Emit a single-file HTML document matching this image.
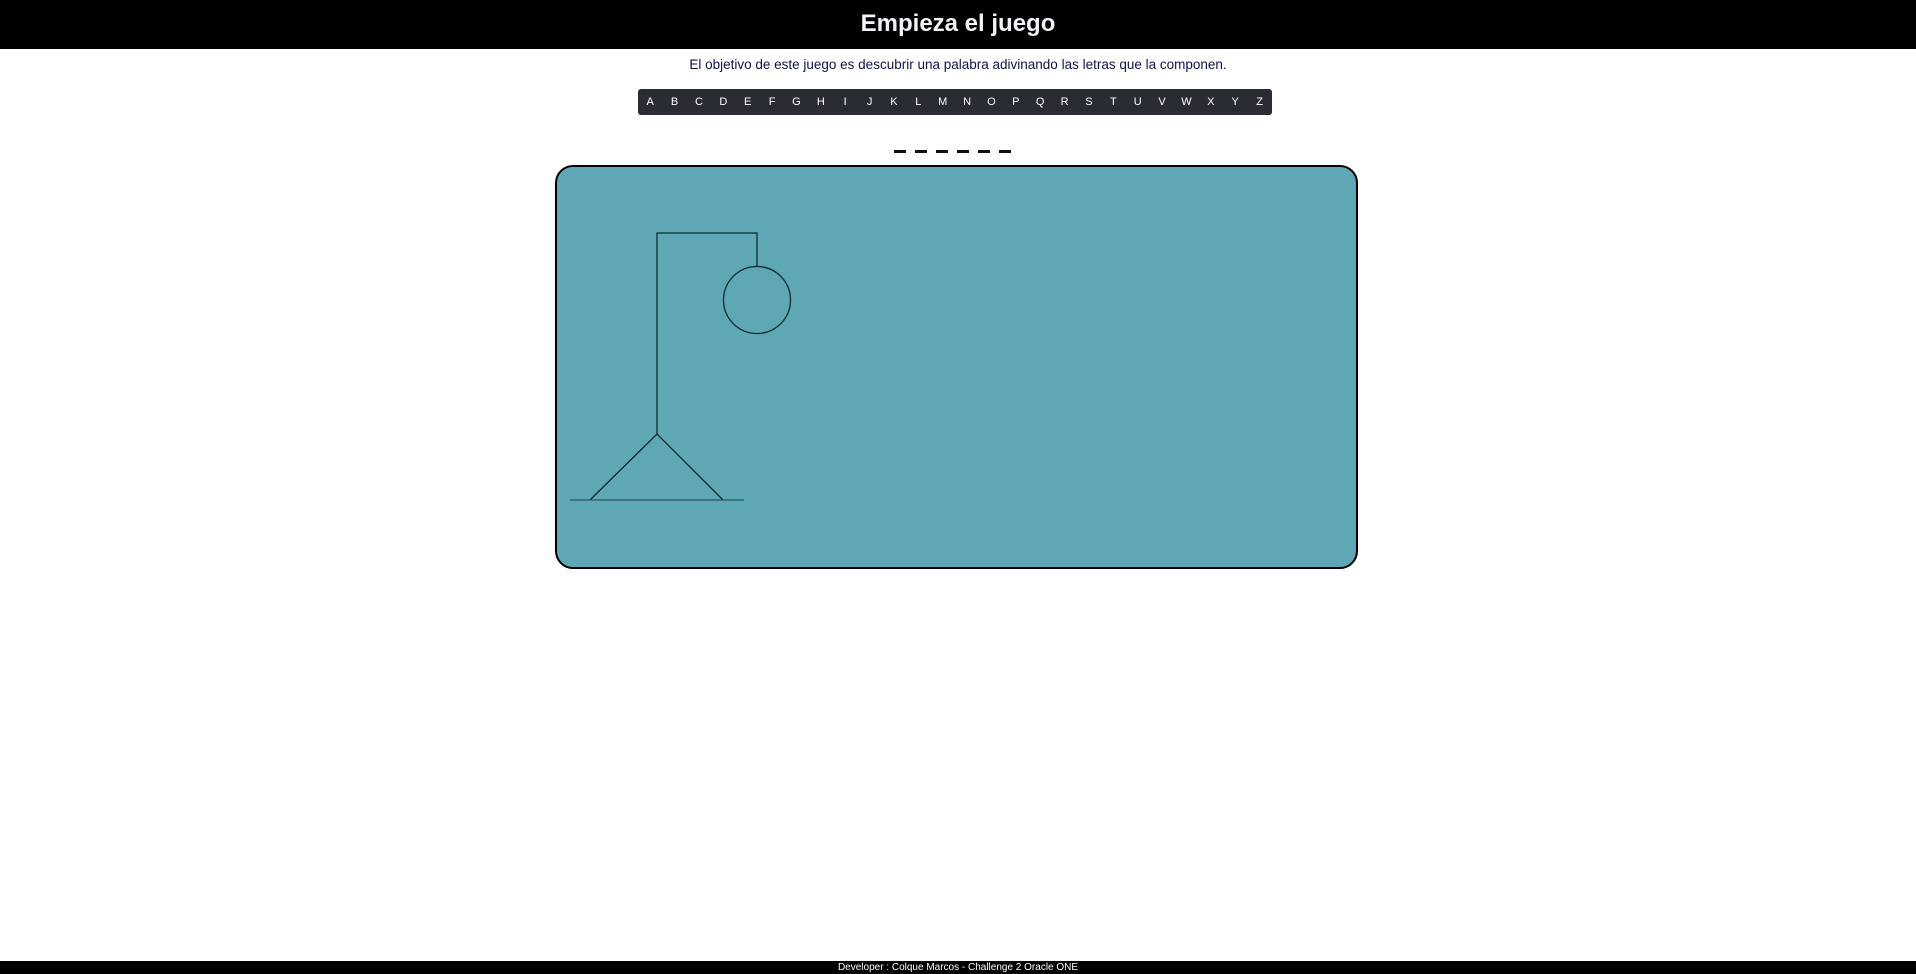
<!DOCTYPE html>
<html><head><meta charset="utf-8"><style>
*{margin:0;padding:0;box-sizing:border-box}
body{width:1916px;height:974px;background:#fff;font-family:"Liberation Sans",sans-serif;position:relative;overflow:hidden}
header{position:absolute;left:0;top:0;width:1916px;height:49px;background:#000;color:#f0f3fa;font-size:24px;font-weight:bold;text-align:center;line-height:48px}
.sub{position:absolute;top:57px;left:0;width:1916px;text-align:center;font-size:13.5px;color:#11114a}
.bar{position:absolute;left:638px;top:89px;width:634px;height:26px;background:#2a2c33;border-radius:3px;display:flex}
.bar span{width:24.38px;text-align:center;color:#fff;font-size:11px;line-height:26px}
.dash{position:absolute;top:150px;height:3px;width:12px;background:#111}
.box{position:absolute;left:555px;top:165px;width:803px;height:404px;background:#5ea8b5;border:2px solid #000;border-radius:18px}
svg{position:absolute;left:0;top:0}
footer{position:absolute;left:0;top:961px;width:1916px;height:13px;background:#000;color:#fff;font-size:10px;text-align:center;line-height:13px}
</style></head><body>
<header>Empieza el juego</header>
<div class="sub">El objetivo de este juego es descubrir una palabra adivinando las letras que la componen.</div>
<div class="bar"><span>A</span><span>B</span><span>C</span><span>D</span><span>E</span><span>F</span><span>G</span><span>H</span><span>I</span><span>J</span><span>K</span><span>L</span><span>M</span><span>N</span><span>O</span><span>P</span><span>Q</span><span>R</span><span>S</span><span>T</span><span>U</span><span>V</span><span>W</span><span>X</span><span>Y</span><span>Z</span></div>
<div class="dash" style="left:894px"></div><div class="dash" style="left:915px"></div><div class="dash" style="left:936px"></div><div class="dash" style="left:957px"></div><div class="dash" style="left:978px"></div><div class="dash" style="left:999px"></div>
<div class="box"></div>
<svg width="1916" height="974">
<g fill="none" stroke="#102a30" stroke-width="1.3">
<path d="M657 434 V233 H757 V267"/>
<circle cx="757" cy="300" r="33.5"/>
<path d="M590 500 L657 434 L723 500"/>
<path d="M570 500 H744" stroke="#2f5560"/>
</g></svg>
<footer>Developer : Colque Marcos - Challenge 2 Oracle ONE</footer>
</body></html>
